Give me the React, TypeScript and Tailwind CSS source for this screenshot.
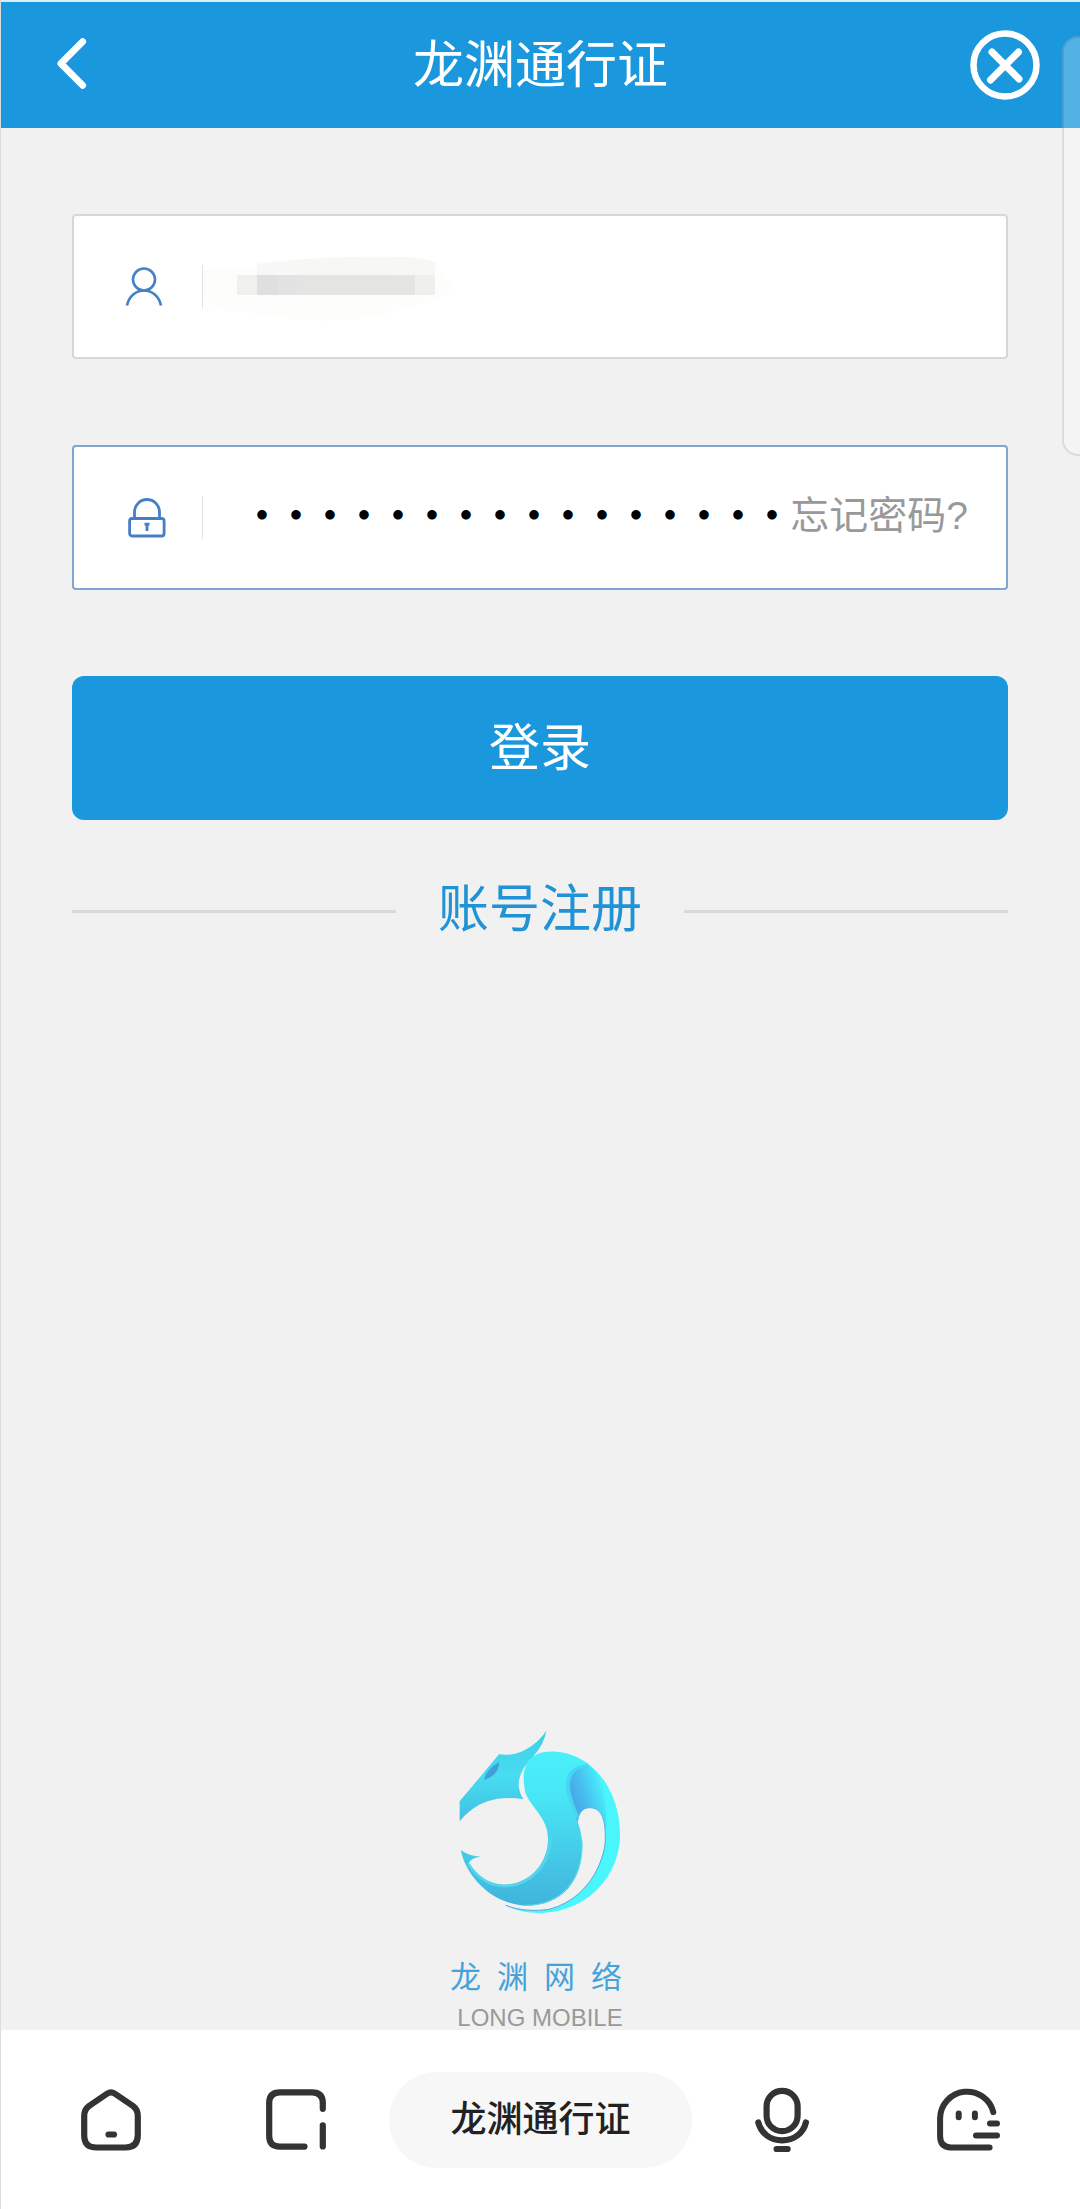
import { useState } from "react";

function UserIcon() {
  return (
    <svg width="38" height="40" viewBox="0 0 38 40" fill="none" stroke="#4580c4" strokeWidth="2.6" aria-hidden="true">
      <circle cx="19" cy="12.5" r="11" />
      <path d="M2 38.5C4 29 11 23.5 19 23.5S34 29 36 38.5" />
    </svg>
  );
}

function LockIcon() {
  return (
    <svg width="38" height="40" viewBox="0 0 38 40" fill="none" stroke="#4580c4" strokeWidth="2.8" aria-hidden="true">
      <path d="M6.5 20V14A12.5 12.5 0 0 1 31.5 14V20" />
      <rect x="1.6" y="20.5" width="34.5" height="17.5" rx="2.5" />
      <path d="M19 26V33M16.5 26.2H21.5" strokeWidth="2.8" />
    </svg>
  );
}

function PixelatedName() {
  return (
    <svg
      className="pointer-events-none absolute top-8 left-0"
      width="250"
      height="84"
      viewBox="0 0 250 84"
      aria-hidden="true"
    >
      <path d="M0 22L50 22L54 15Q140 6 215 10L232 14L250 40L235 52L195 62Q140 80 70 68L20 62L0 52Z" fill="#fdfdfc" />
      <path d="M54 28V18Q54 16 60 15Q140 7 200 9Q222 10 232 14V28Z" fill="#f7f7f6" />
      <rect x="34" y="27" width="20" height="20" fill="#f0f0ef" />
      <rect x="54" y="27" width="20" height="20" fill="#dfdfe0" />
      <rect x="74" y="27" width="20" height="20" fill="#e2e2e2" />
      <rect x="94" y="27" width="98" height="20" fill="#e4e4e3" />
      <rect x="192" y="27" width="20" height="20" fill="#e5e5e3" />
      <rect x="212" y="27" width="20" height="20" fill="#efefee" />
    </svg>
  );
}

function DragonLogo() {
  return (
    <svg width="162" height="184" viewBox="90 58 486 552" aria-hidden="true">
      <defs>
        <linearGradient id="head" x1="0" y1="0" x2="0" y2="1">
          <stop offset="0" stopColor="#3fcfe9" />
          <stop offset="0.5" stopColor="#47dcf0" />
          <stop offset="1" stopColor="#42bfe2" />
        </linearGradient>
        <linearGradient id="body" x1="0" y1="0" x2="0" y2="1">
          <stop offset="0" stopColor="#48f0fb" />
          <stop offset="0.3" stopColor="#48e6f6" />
          <stop offset="0.7" stopColor="#44c8e6" />
          <stop offset="1" stopColor="#41b4dc" />
        </linearGradient>
        <linearGradient id="fold" gradientUnits="userSpaceOnUse" x1="430" y1="245" x2="525" y2="215">
          <stop offset="0" stopColor="#46ace9" />
          <stop offset="0.35" stopColor="#48bff0" />
          <stop offset="1" stopColor="#48f6fb" />
        </linearGradient>
      </defs>
      <path
        d="M92 272L210 131Q255 136 288 118Q330 95 352 60Q346 100 312 138Q268 180 269 225Q272 250 284 266Q225 255 175 272Q125 290 92 332Z"
        fill="url(#head)"
      />
      <path d="M165 208Q172 175 210 155Q210 194 165 208Z" fill="#3f9fdb" />
      <path
        d="M370 123C490 123 573 240 573 370C573 505 465 607 330 607C290 607 255 598 230 584C270 600 320 603 360 596C430 578 478 530 505 475C525 430 529 400 529 380C529 320 515 291 482 291C458 291 448 310 445 335L410 240L420 175Z"
        fill="#48f6fb"
      />
      <path
        d="M230 584C270 600 320 602 360 596C430 578 478 530 505 475C528 425 529 400 529 380C529 320 515 291 482 291C458 291 448 310 445 335"
        fill="none"
        stroke="#62a4df"
        strokeWidth="3"
      />
      <path
        d="M445 335C420 285 400 230 420 190C432 168 452 160 480 164C512 190 526 230 530 290C533 330 532 350 529 370C529 320 515 291 482 291C458 291 448 310 445 335Z"
        fill="url(#fold)"
      />
      <path
        d="M475 164C438 162 413 190 416 232C420 268 434 295 444 322"
        fill="none"
        stroke="#48d4f3"
        strokeWidth="14"
      />
      <path
        d="M290 250C277 190 284 150 325 130C375 112 440 130 475 162C430 163 407 190 410 232C415 275 460 335 460 405C460 510 400 585 290 585C190 580 112 500 95 418Q120 436 155 438Q122 442 118 460Q160 522 225 522C300 522 357 460 357 385C357 325 315 300 290 250Z"
        fill="url(#body)"
      />
      <path
        d="M459 390C464 502 400 584 290 584"
        fill="none"
        stroke="#5cdcf2"
        strokeWidth="3"
      />
      <path
        d="M118 460Q160 524 225 526C304 526 363 462 363 385"
        fill="none"
        stroke="#55d5ee"
        strokeWidth="8"
      />
    </svg>
  );
}

function HomeIcon() {
  return (
    <svg width="60" height="62" viewBox="0 0 60 62" fill="none" stroke="#333" strokeWidth="6.2" strokeLinecap="round" strokeLinejoin="round" aria-hidden="true">
      <path d="M3.2 27Q3.2 20.5 8 17L26 4.7Q30 2 34 4.7L52 17Q56.8 20.5 56.8 27V46Q56.8 58.5 44.5 58.5H15.5Q3.2 58.5 3.2 46Z" />
      <path d="M27.5 45.5H33" />
    </svg>
  );
}

function WindowsIcon() {
  return (
    <svg width="60" height="61" viewBox="0 0 60 61" fill="none" stroke="#333" strokeWidth="6.2" strokeLinecap="round" aria-hidden="true">
      <path d="M38.5 57.6H14Q3.2 57.6 3.2 47V14Q3.2 3.4 14 3.4H46Q56.8 3.4 56.8 14V19.8" />
      <path d="M56.8 36.4V57.4" />
    </svg>
  );
}

function MicIcon() {
  return (
    <svg width="54" height="66" viewBox="0 0 54 66" fill="none" stroke="#333" strokeWidth="6.2" strokeLinecap="round" aria-hidden="true">
      <rect x="11.6" y="3.8" width="31" height="40.4" rx="15.5" />
      <path d="M3.3 35.4C6 46 15 53.4 27.1 53.4S48.3 46 50.9 35.4" />
      <path d="M21.6 62H32.6" />
    </svg>
  );
}

function GhostIcon() {
  return (
    <svg width="63" height="63" viewBox="0 0 63 63" fill="none" stroke="#333" strokeWidth="6" strokeLinecap="round" aria-hidden="true">
      <path d="M56.3 24.2A27 27 0 0 0 3.1 30V48Q3.1 59.4 14 59.4H52.6" />
      <path d="M21.7 25.6V29.2M37.9 25.6V29.2M53 35.4H60M39 47.4H60" />
    </svg>
  );
}

export default function App() {
  const [name, setName] = useState("");
  const [password, setPassword] = useState("longyuan20180808");

  return (
    <div
      lang="zh-CN"
      className="relative flex min-h-screen flex-col overflow-hidden border-l border-[#dcdcdc] bg-[#f1f1f1] font-['Liberation_Sans','Noto_Sans_CJK_SC',sans-serif]"
    >
      <header className="grid h-32 grid-cols-[1fr_auto_1fr] items-center border-t-2 border-[#d3f1fa] bg-[#1a97dd] pr-10 pl-14 text-white">
        <button type="button" aria-label="返回" className="justify-self-start pb-1">
          <svg width="31" height="53" viewBox="0 0 32 54" fill="none" stroke="currentColor" strokeWidth="7" strokeLinecap="round" strokeLinejoin="round" aria-hidden="true">
            <path d="M26.5 4.5L4 27L26.5 49.5" />
          </svg>
        </button>
        <h1 className="-ml-4 text-[51px] leading-none font-normal">龙渊通行证</h1>
        <button type="button" aria-label="关闭" className="justify-self-end">
          <svg width="70" height="70" viewBox="0 0 70 70" fill="none" stroke="currentColor" strokeWidth="6.5" strokeLinecap="round" aria-hidden="true">
            <circle cx="35" cy="35" r="31.5" />
            <path d="M22 22L49 49M48.5 22L20.5 50" strokeWidth="7" />
          </svg>
        </button>
      </header>

      <div className="absolute top-9 right-0 h-[420px] w-[18px] rounded-l-2xl border-2 border-r-0 border-black/10 bg-white/25" />

      <main className="flex flex-1 flex-col pr-[72px] pl-[71px]">
        <form className="flex flex-col pt-[86px]" onSubmit={(e) => e.preventDefault()}>
          <div className="flex h-[145px] items-center rounded border-2 border-[#d6d6d6] bg-white">
            <label htmlFor="account" className="flex w-[129px] items-center justify-between pl-[51px]">
              <UserIcon />
              <span className="h-[43px] w-px bg-[#e2e2e2]" />
            </label>
            <div className="relative h-full flex-1">
              <input
                id="account"
                aria-label="账号"
                value={name}
                onChange={(e) => setName(e.target.value)}
                className="h-full w-full bg-transparent pl-[52px] text-[40px] outline-none"
              />
              <PixelatedName />
            </div>
          </div>

          <div className="mt-[86px] flex h-[145px] items-center rounded border-2 border-[#7fa6d0] bg-white">
            <label htmlFor="password" className="flex w-[129px] items-center justify-between pl-[54px]">
              <LockIcon />
              <span className="h-[43px] w-px bg-[#e2e2e2]" />
            </label>
            <input
              id="password"
              type="password"
              aria-label="密码"
              value={password}
              onChange={(e) => setPassword(e.target.value)}
              className="h-full min-w-0 flex-1 bg-transparent pb-2 pl-[42px] font-['Noto_Sans_CJK_SC',sans-serif] text-[34px] font-black text-black outline-none"
            />
            <a href="#forgot" className="pr-[38px] pb-1 text-[39px] leading-none text-[#999]">
              忘记密码?
            </a>
          </div>

          <button type="submit" className="mt-[86px] h-36 rounded-xl bg-[#1a97dd] text-[51px] leading-none text-white">
            登录
          </button>
        </form>

        <div className="mt-16 flex items-center gap-[42px]">
          <span className="h-[3px] flex-1 bg-[#d9d9d9]" />
          <a href="#register" className="pb-1 text-[51px] leading-none text-[#1f93d6]">
            账号注册
          </a>
          <span className="h-[3px] flex-1 bg-[#d9d9d9]" />
        </div>

        <div className="mt-auto flex flex-col items-center">
          <DragonLogo />
          <p className="mt-12 mr-2 flex gap-4 text-[31px] leading-8 text-[#46a3d9]">
            <span>龙</span>
            <span>渊</span>
            <span>网</span>
            <span>络</span>
          </p>
          <p className="mt-3 text-[24px] leading-6 text-[#999]">LONG MOBILE</p>
        </div>
      </main>

      <nav className="flex h-[179px] items-center bg-white px-20">
        <div className="flex flex-1 items-center justify-between pr-[63px]">
          <button type="button" aria-label="主页">
            <HomeIcon />
          </button>
          <button type="button" aria-label="窗口">
            <WindowsIcon />
          </button>
        </div>
        <button type="button" className="h-24 w-[303px] rounded-full bg-[#f7f7f7] text-[36px] leading-none font-medium text-[#222]">
          龙渊通行证
        </button>
        <div className="flex flex-1 items-center justify-between pl-[63px]">
          <button type="button" aria-label="语音">
            <MicIcon />
          </button>
          <button type="button" aria-label="我的">
            <GhostIcon />
          </button>
        </div>
      </nav>
    </div>
  );
}
